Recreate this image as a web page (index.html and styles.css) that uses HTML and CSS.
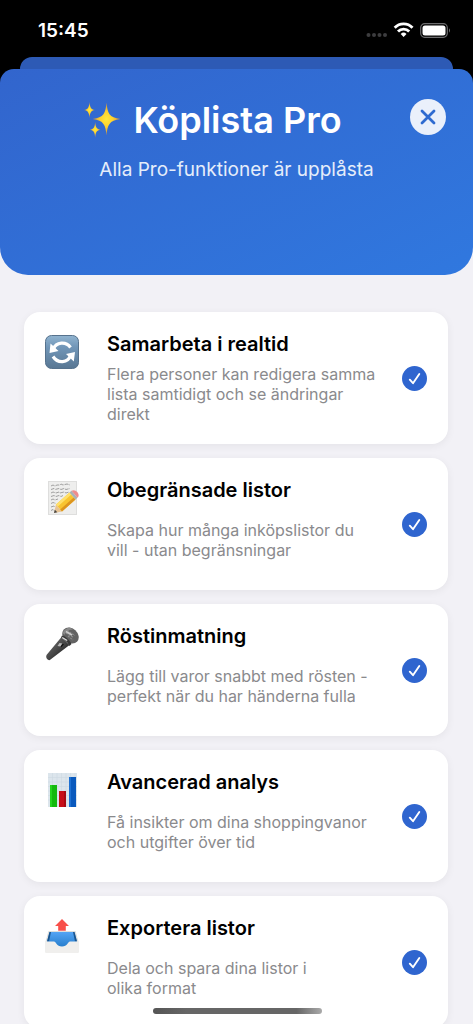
FILE: index.html
```html
<!DOCTYPE html>
<html lang="sv">
<head>
<meta charset="utf-8">
<meta name="viewport" content="width=device-width, initial-scale=1">
<title>Köplista Pro</title>
<link rel="stylesheet" href="styles.css">
</head>
<body>
<svg class="defs" width="0" height="0" aria-hidden="true">
  <defs>
    <symbol id="check" viewBox="0 0 25 25">
      <circle cx="12.500" cy="12.500" r="12.500" fill="#2f65cf"/>
      <path d="M7.800 13.700 L11 17.200 L17.300 8" fill="none" stroke="#fff" stroke-width="1.900" stroke-linecap="round" stroke-linejoin="round"/>
    </symbol>
  </defs>
</svg>
<div class="screen">
  <div class="status">
    <span class="time">15:45</span>
    <svg class="status-icons" width="86" height="18" viewBox="0 0 86 18" aria-hidden="true">
      <g fill="#3d3d3f"><circle cx="3.500" cy="13" r="2"/><circle cx="9" cy="13" r="2"/><circle cx="14.500" cy="13" r="2"/><circle cx="20" cy="13" r="2"/></g>
      <g fill="none" stroke="#fff" stroke-width="2.800">
        <path d="M29.700 5.700 A12.200 12.200 0 0 1 47.500 5.700"/>
        <path d="M33 9.500 A7.700 7.700 0 0 1 44.200 9.500"/>
      </g>
      <path d="M35.700 12 A4.200 4.200 0 0 1 41.500 12 L38.600 15z" fill="#fff"/>
      <rect x="55.700" y="1.700" width="26.600" height="13.600" rx="4" fill="none" stroke="#6c6c6e" stroke-width="1.200"/>
      <rect x="57.500" y="3.500" width="23" height="10" rx="2.500" fill="#fff"/>
      <path d="M84 6.300 Q86 8.500 84 10.700z" fill="#6c6c6e"/>
    </svg>
  </div>
  <div class="backdrop"><div class="sheet-back"></div></div>
  <div class="sheet-top">
    <header class="hero">
      <div class="hero-row">
        <h1 class="hero-title">
          <svg width="38" height="38" viewBox="0 0 38 38" aria-hidden="true">
            <defs><radialGradient id="spark"><stop offset="0" stop-color="#ffe83b"/><stop offset=".45" stop-color="#fdd12e"/><stop offset="1" stop-color="#c98a45"/></radialGradient></defs>
            <g fill="url(#spark)">
              <path d="M23.500 1.500 C24.500 12 26 16.500 37.500 18 C26 19.500 24.500 24 23.500 34.500 C22.500 24 21 19.500 9.500 18 C21 16.500 22.500 12 23.500 1.500z"/>
              <path d="M6.500 1 C7 6.500 8 8.500 12 9 C8 9.500 7 11.500 6.500 17 C6 11.500 5 9.500 1 9 C5 8.500 6 6.500 6.500 1z"/>
              <path d="M12.200 21 C12.700 26.500 13.700 28.200 17.700 28.700 C13.700 29.200 12.700 31 12.200 36.500 C11.700 31 10.700 29.200 6.700 28.700 C10.700 28.200 11.700 26.500 12.200 21z"/>
            </g>
          </svg>
          <span>Köplista Pro</span>
        </h1>
        <button class="close" type="button" aria-label="Stäng">
          <svg width="36" height="36" viewBox="0 0 36 36" aria-hidden="true"><path d="M12 12 L24 24 M24 12 L12 24" stroke="#2f6bd0" stroke-width="2.800" stroke-linecap="round"/></svg>
        </button>
      </div>
      <p class="hero-sub">Alla Pro-funktioner är upplåsta</p>
    </header>
  </div>
  <main class="list">
    <article class="card">
      <svg class="icon" viewBox="0 0 36 36" aria-hidden="true">
        <defs><linearGradient id="tile" x2="0" y2="1"><stop offset="0" stop-color="#91b4d0"/><stop offset=".35" stop-color="#7196b8"/><stop offset="1" stop-color="#587793"/></linearGradient></defs>
        <rect x="1.500" y="1.500" width="33" height="33" rx="6" fill="url(#tile)" stroke="#56728d"/>
        <path d="M9.500 15 C12 8 22 7 26.500 13.500" fill="none" stroke="#fff" stroke-width="3.200"/>
        <path d="M26.500 21.500 C24 29 14 30 9 22.500" fill="none" stroke="#fff" stroke-width="3.200"/>
        <path d="M6.500 9.500 L5.500 19 L14.500 17z M29.800 27.500 L31 18 L22 20z" fill="#fff"/>
      </svg>
      <div class="body">
        <h2 class="name">Samarbeta i realtid</h2>
        <div class="desc"><p>Flera personer kan redigera samma<br>lista samtidigt och se ändringar<br>direkt</p></div>
      </div>
      <svg class="check" role="img" aria-label="Upplåst"><use href="#check"/></svg>
    </article>
    <article class="card">
      <svg class="icon" viewBox="0 0 36 36" aria-hidden="true">
        <rect x="4.500" y="1.500" width="28" height="33" fill="#eeeeed" stroke="#dededd"/>
        <path d="M7 6 l2-1 2 1 2-1 h3 l1-1 2 1 4-1 3 1 M7 9.500 l3-1 1 1 4-1 2 1 3-1 2 1 4-1 M7 13 l2-1 3 1 3-1 1 1 4-1 2 1 3-1 M7 16.500 l3-1 2 1 3-1 2 1 2-1 M7 20 l2-1 2 1 3-1 M7 23.500 l2-1 3 1 M7 27 l3-1 1 1 M7 30.500 l2-1 1 1" fill="none" stroke="#8a8a8a" stroke-width=".8" stroke-dasharray="4 1"/>
        <path d="M10 33 L12 24.500 L18 31.500z" fill="#e7c394"/>
        <path d="M10 33 L10.800 29.800 L13.300 32.300z" fill="#444"/>
        <path d="M12 24.500 L25.500 12.500 L31.500 19.500 L18 31.500z" fill="#f8c431"/>
        <path d="M12 24.500 L25.500 12.500 L27.300 14.600 L13.800 26.600z" fill="#ffe06a"/>
        <path d="M16.200 29.400 L29.700 17.400 L31.500 19.500 L18 31.500z" fill="#dd951f"/>
        <path d="M25.500 12.500 L27.500 10.800 L33.500 17.800 L31.500 19.500z" fill="#a9b1b4"/>
        <path d="M27.500 10.800 Q30.500 9 33.300 12 Q36 15.500 33.500 17.800z" fill="#ee8c8c"/>
      </svg>
      <div class="body">
        <h2 class="name">Obegränsade listor</h2>
        <div class="desc"><p>Skapa hur många inköpslistor du<br>vill - utan begränsningar</p></div>
      </div>
      <svg class="check" role="img" aria-label="Upplåst"><use href="#check"/></svg>
    </article>
    <article class="card">
      <svg class="icon" viewBox="0 0 36 36" aria-hidden="true">
        <defs><linearGradient id="mic" x1="0" y1="0" x2="1" y2="1"><stop offset=".25" stop-color="#606060"/><stop offset=".5" stop-color="#484848"/><stop offset=".8" stop-color="#222"/></linearGradient></defs>
        <path d="M17.500 11 L2.500 29 Q1.500 31 3 33 Q5 35 6.500 33.500 L25.500 19z" fill="url(#mic)"/>
        <ellipse cx="26.500" cy="9.500" rx="9" ry="7.200" transform="rotate(42 26.500 9.500)" fill="#626262"/>
        <path d="M18.500 7 Q21 2 26 1.500 L29 3.500 Q22 4 20.500 9z" fill="#888"/>
        <path d="M18 9.500 Q24 11 27.500 18 L25.500 20 Q22 13.500 17 11.500z" fill="#373737"/>
        <path d="M22 7 l7 4 M23 4.500 l8 5 M24 10 l5 4" stroke="#8c8c8c" stroke-width="1.200" stroke-dasharray="2 1"/>
        <path d="M22 5.500 l6 3.500" stroke="#ccc" stroke-width="1.600"/>
        <path d="M18.200 11.500 l5 3" stroke="#ddd" stroke-width="1.400"/>
        <path d="M15.500 17 l3 .5 -2 3 -3-.5z" fill="#b8b8b8"/><path d="M18.500 17.500 l-2 3 1 .7 2.500-3z" fill="#161616"/>
      </svg>
      <div class="body">
        <h2 class="name">Röstinmatning</h2>
        <div class="desc"><p>Lägg till varor snabbt med rösten -<br>perfekt när du har händerna fulla</p></div>
      </div>
      <svg class="check" role="img" aria-label="Upplåst"><use href="#check"/></svg>
    </article>
    <article class="card">
      <svg class="icon" viewBox="0 0 36 36" aria-hidden="true">
        <rect x="4" y="1" width="29" height="34" fill="#dce5ec"/>
        <path d="M4 5.500 H33 M4 10 H33 M4 14.500 H33 M4 19 H33 M4 23.500 H33 M4 28 H33 M8.500 1 V35 M13 1 V35 M17.500 1 V35 M22 1 V35 M26.500 1 V35 M31 1 V35" stroke="#cbd6e0" stroke-width=".5"/>
        <rect x="6" y="13" width="7" height="22" fill="#13b90d"/><rect x="6" y="13" width="2" height="22" fill="#23d31c"/>
        <rect x="15" y="19" width="7" height="16" fill="#c60d18"/><rect x="20" y="19" width="2" height="16" fill="#a60913"/>
        <rect x="25" y="5" width="7" height="30" fill="#0959bd"/><rect x="25" y="5" width="2" height="30" fill="#1d70d2"/>
      </svg>
      <div class="body">
        <h2 class="name">Avancerad analys</h2>
        <div class="desc"><p>Få insikter om dina shoppingvanor<br>och utgifter över tid</p></div>
      </div>
      <svg class="check" role="img" aria-label="Upplåst"><use href="#check"/></svg>
    </article>
    <article class="card">
      <svg class="icon" viewBox="0 0 36 36" aria-hidden="true">
        <defs><linearGradient id="tray" x2="0" y2="1"><stop offset="0" stop-color="#54a4f5"/><stop offset="1" stop-color="#247bc9"/></linearGradient></defs>
        <path d="M4.500 13 H31.500 L34.500 23.500 V34 Q34.500 35 33.500 35 H2.500 Q1.500 35 1.500 34 V23.500z" fill="#dededc"/>
        <path d="M5.500 14 H30.500 L33 23.500 L25 30 H11 L3 23.500z" fill="url(#tray)"/>
        <path d="M5.500 14 L3 23.500 H5 L7 14z M30.500 14 L33 23.500 H31 L29 14z" fill="#1b548c"/>
        <path d="M1.500 23.500 H10 C12 23.500 12.500 28.500 18 28.500 C23.500 28.500 24 23.500 26 23.500 H34.500 V34 Q34.500 35 33.500 35 H2.500 Q1.500 35 1.500 34z" fill="#f0efed"/>
        <path d="M18 1 L25 8 H21.800 V12.800 H14.200 V8 H11z" fill="#f8504a"/>
      </svg>
      <div class="body">
        <h2 class="name">Exportera listor</h2>
        <div class="desc"><p>Dela och spara dina listor i<br>olika format</p></div>
      </div>
      <svg class="check" role="img" aria-label="Upplåst"><use href="#check"/></svg>
    </article>
  </main>
  <div class="home-bar"></div>
</div>
</body>
</html>
```
FILE: styles.css
```css
* { box-sizing: border-box; }

body {
  margin: 0;
  background: #f2f1f6;
  color: #000;
  font-family: Inter, "Liberation Sans", sans-serif;
}

h1, h2, p { margin: 0; }

.defs { position: absolute; }

.screen {
  position: relative;
  height: 100vh;
  overflow: hidden;
}

.status {
  display: flex;
  justify-content: space-between;
  align-items: center;
  height: 57px;
  padding: 4px 22px 0 38px;
  background: #000;
  color: #fff;
}

.time {
  font-size: 19px;
  font-weight: 600;
  line-height: 24px;
}

.backdrop {
  padding: 0 20px;
  background: #000;
}

.sheet-back {
  height: 12px;
  background: #2d5ab5;
  border-radius: 12px 12px 0 0;
}

.sheet-top {
  background: linear-gradient(#000 0 40px, #f2f1f6 40px);
}

.hero {
  display: flex;
  flex-direction: column;
  gap: 14px;
  min-height: 206px;
  padding: 28px 27px;
  border-radius: 14px 14px 28px 28px;
  background: linear-gradient(155deg, #3265cd, #3078df);
  color: #fff;
}

.hero-row {
  display: flex;
  gap: 12px;
}

.hero-title {
  flex: 1;
  display: flex;
  align-items: center;
  justify-content: center;
  gap: 12px;
  font-size: 36px;
  font-weight: 600;
  line-height: 46px;
}

.hero-sub {
  color: #e5edfa;
  font-size: 19px;
  line-height: 26px;
  text-align: center;
}

.close {
  flex: none;
  width: 36px;
  height: 36px;
  margin-top: 2px;
  padding: 0;
  border: 0;
  border-radius: 50%;
  background: #eaf0fb;
}

.close svg { display: block; }

.list {
  display: flex;
  flex-direction: column;
  gap: 14px;
  padding: 37px 25px 24px 24px;
}

.card {
  display: flex;
  flex: none;
  padding: 20px 21px 20px 20px;
  border-radius: 16px;
  background: #fff;
  box-shadow: 0 2px 8px rgba(0, 0, 0, 0.06);
}

.icon {
  flex: none;
  width: 36px;
  height: 36px;
  margin-top: 2px;
}

.body {
  flex: 1;
  display: flex;
  flex-direction: column;
  gap: 8px;
  min-width: 0;
  padding-left: 27px;
}

.name {
  font-size: 20px;
  font-weight: 600;
  line-height: 24px;
}

.desc {
  display: flex;
  align-items: center;
  min-height: 60px;
  color: #8a8a8d;
  font-size: 16px;
  line-height: 20px;
  white-space: nowrap;
}

.check {
  flex: none;
  align-self: center;
  width: 25px;
  height: 25px;
}

.home-bar {
  position: absolute;
  bottom: 10px;
  left: 50%;
  width: 169px;
  height: 6px;
  margin-left: -84px;
  border-radius: 3px;
  background: linear-gradient(90deg, #555 0%, #666 20%, #666 85%, #aaa 100%);
}
```
